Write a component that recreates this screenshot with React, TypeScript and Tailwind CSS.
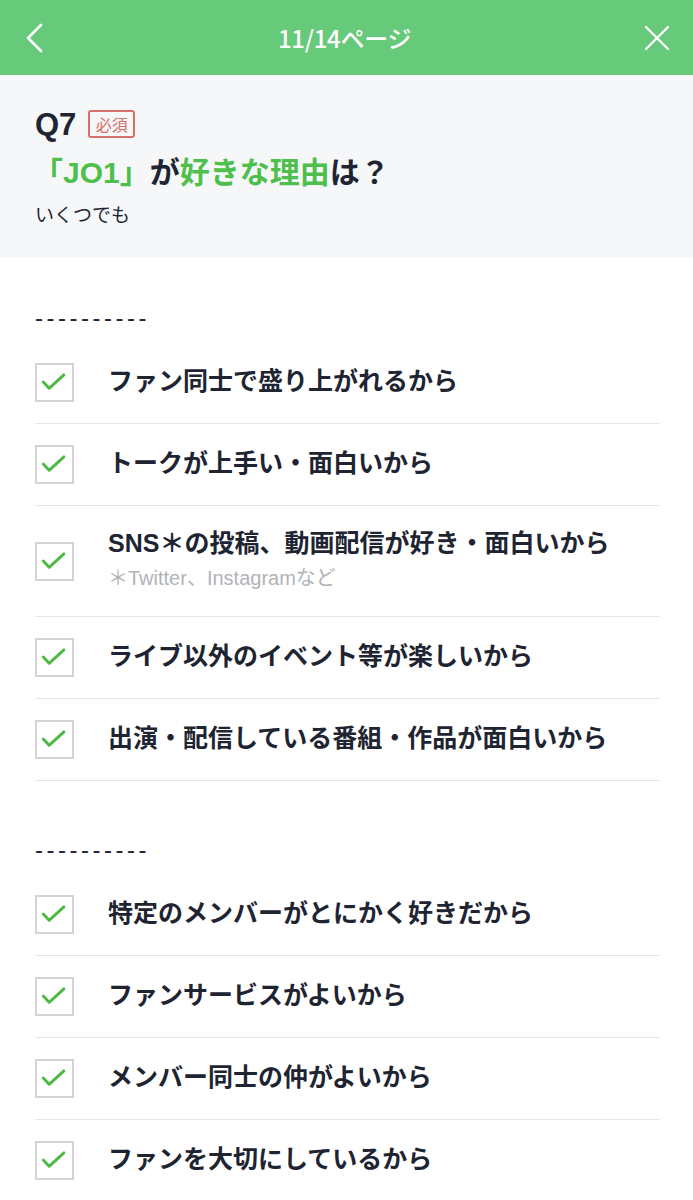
const groups: { items: { text: string; sub?: string }[] }[] = [
  {
    items: [
      { text: 'ファン同士で盛り上がれるから' },
      { text: 'トークが上手い・面白いから' },
      { text: 'SNS＊の投稿、動画配信が好き・面白いから', sub: '＊Twitter、Instagramなど' },
      { text: 'ライブ以外のイベント等が楽しいから' },
      { text: '出演・配信している番組・作品が面白いから' },
    ],
  },
  {
    items: [
      { text: '特定のメンバーがとにかく好きだから' },
      { text: 'ファンサービスがよいから' },
      { text: 'メンバー同士の仲がよいから' },
      { text: 'ファンを大切にしているから' },
    ],
  },
];

function CheckBox() {
  return (
    <div className="flex h-[39px] w-[39px] shrink-0 items-center justify-center border-2 border-[#d4d4d4] bg-white">
      <svg width="39" height="39" viewBox="0 0 39 39" fill="none">
        <path d="M7 19l6.5 7L30 11" stroke="#4cb944" strokeWidth="3.2" strokeLinecap="round" strokeLinejoin="round" />
      </svg>
    </div>
  );
}

function Row({ text, sub }: { text: string; sub?: string }) {
  return (
    <div className={`flex items-center gap-[34px] border-b border-[#e6e6e6] ${sub ? 'h-[111px]' : 'h-[82px]'}`}>
      <CheckBox />
      <div className="-mt-[4px]">
        <div className="text-[25px] font-bold leading-[32px] text-[#1e2431]">{text}</div>
        {sub && <div className="mt-[6px] text-[20px] leading-[26px] text-[#b0b3b8]">{sub}</div>}
      </div>
    </div>
  );
}

export default function App() {
  return (
    <div
      className="min-h-[1200px] bg-white"
      style={{ fontFamily: '"Liberation Sans", "Noto Sans CJK JP", sans-serif' }}
    >
      <header className="flex h-[75px] items-center justify-between bg-[#67c97a] pl-[22px] pr-[22px]">
        <svg width="24" height="32" viewBox="0 0 24 32" fill="none">
          <path d="M19 3L6 16l13 13" stroke="white" strokeWidth="2.6" strokeLinecap="round" strokeLinejoin="round" />
        </svg>
        <div className="text-[24px] font-medium tracking-[-0.3px] text-white" style={{ fontFamily: '"Noto Sans CJK JP", sans-serif' }}>
          11/14ページ
        </div>
        <svg width="28" height="28" viewBox="0 0 28 28" fill="none">
          <path d="M3 3l22 22M25 3L3 25" stroke="white" strokeWidth="2.4" strokeLinecap="round" />
        </svg>
      </header>

      <section className="h-[183px] bg-[#f6f7f9] px-[35px] pt-[34px]">
        <div className="flex h-[30px] items-center gap-[12px]">
          <span className="text-[31px] font-bold leading-none text-[#1e2431]">Q7</span>
          <span
            className="flex h-[28px] w-[47px] items-center justify-center rounded-[3px] border-2 border-[#d6706c] text-[16px] leading-none text-[#d6706c]"
            style={{ fontFamily: '"Noto Sans CJK JP", sans-serif' }}
          >
            必須
          </span>
        </div>
        <div className="mt-[14px] text-[30px] font-bold leading-[40px] text-[#1e2431]">
          <span className="-ml-[2px] text-[#4fbf4b]">「JO1」</span>が<span className="text-[#4fbf4b]">好きな理由</span>は？
        </div>
        <div className="mt-[10px] text-[19px] leading-[26px] text-[#1e2431]">いくつでも</div>
      </section>

      <main className="px-[33px] pt-[46px]">
        {groups.map((g, gi) => (
          <div key={gi} className={gi > 0 ? 'mt-[55px]' : ''}>
            <div className="pl-[2px] text-[24px] leading-[28px] tracking-[3.5px] text-[#1e2431]">----------</div>
            <div className="mt-[10px] pl-[2px]">
              {g.items.map((it) => (
                <Row key={it.text} text={it.text} sub={it.sub} />
              ))}
            </div>
          </div>
        ))}
      </main>
    </div>
  );
}
